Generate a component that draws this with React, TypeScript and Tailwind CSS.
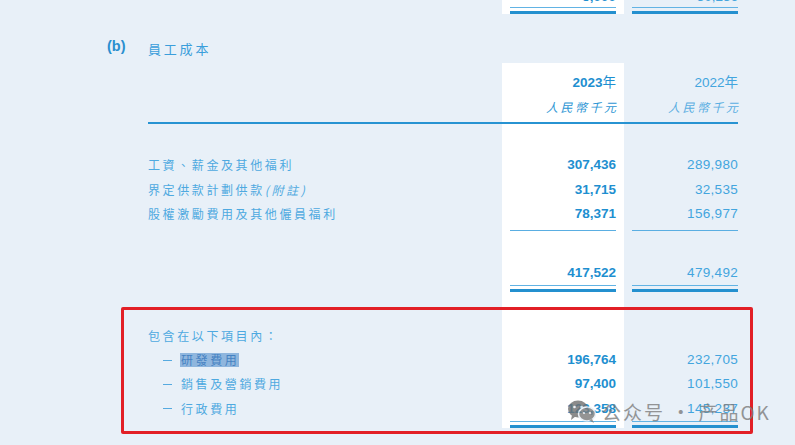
import React from 'react';

const cjk = { fontFamily: '"Noto Sans CJK TC", "Noto Sans CJK SC", sans-serif' };
const num = { fontFamily: '"Liberation Sans", Arial, sans-serif' };

function Row({
  h,
  left,
  label,
  a,
  b,
  className = '',
}: {
  h: string;
  left?: React.ReactNode;
  label?: React.ReactNode;
  a?: React.ReactNode;
  b?: React.ReactNode;
  className?: string;
}) {
  return (
    <div className={`grid grid-cols-[148px_354px_122px_122px] ${h} ${className}`}>
      <div className="flex items-center">{left}</div>
      <div className="flex items-center">{label}</div>
      <div className="bg-white px-2 flex items-center justify-end">{a}</div>
      <div className="px-2 flex items-center justify-end">{b}</div>
    </div>
  );
}

function DoubleLine() {
  return (
    <div className="flex flex-col">
      <div className="h-px bg-[#62b3e4]" />
      <div className="mt-[3px] h-[3px] bg-[#2490cf]" />
    </div>
  );
}

function Single() {
  return <div className="h-px bg-[#5aaee2]" />;
}

const Label = ({ children }: { children: React.ReactNode }) => (
  <span style={cjk} className="text-[12px] tracking-[2.6px] text-[#4ea9e0] leading-none">
    {children}
  </span>
);

const A = ({ children }: { children: React.ReactNode }) => (
  <span style={num} className="text-[13.5px] font-bold text-[#1e8fd0] leading-none">
    {children}
  </span>
);

const B = ({ children }: { children: React.ReactNode }) => (
  <span style={num} className="text-[13.5px] tracking-[0.3px] text-[#43a5de] leading-none">
    {children}
  </span>
);

export default function App() {
  return (
    <div className="relative w-[795px] h-[445px] overflow-hidden bg-[#e8f0f8]">
      {/* top leftover from previous table */}
      <div className="grid grid-cols-[148px_354px_122px_122px] h-[14px]">
        <div />
        <div />
        <div className="bg-white px-2 flex flex-col">
          <div className="h-[3px] overflow-hidden flex justify-end">
            <span style={num} className="text-[13.5px] font-bold text-[#1e8fd0] leading-[13px] -mt-[10px]">
              5,000
            </span>
          </div>
          <div className="mt-[4px]">
            <DoubleLine />
          </div>
        </div>
        <div className="px-2 flex flex-col">
          <div className="h-[3px] overflow-hidden flex justify-end">
            <span style={num} className="text-[13.5px] text-[#43a5de] leading-[13px] -mt-[10px]">
              30,236
            </span>
          </div>
          <div className="mt-[4px]">
            <DoubleLine />
          </div>
        </div>
      </div>

      {/* section heading */}
      <div className="h-[49px] flex items-end pb-[5px]">
        <div className="w-[148px] pl-[107px]">
          <span style={num} className="text-[14.5px] font-bold text-[#2a8fcf]">
            (b)
          </span>
        </div>
        <span style={cjk} className="text-[13px] tracking-[2.8px] text-[#3a9edb]">
          員工成本
        </span>
      </div>

      {/* column headers */}
      <div className="grid grid-cols-[148px_354px_122px_122px] h-[59px]">
        <div />
        <div />
        <div className="bg-white px-2 flex flex-col items-end pt-[10px]">
          <span style={num} className="text-[13.5px] font-bold text-[#1e8fd0] leading-[17px]">
            2023<span style={cjk} className="font-normal">年</span>
          </span>
          <span style={cjk} className="mt-[7px] text-[12px] italic tracking-[2.5px] -mr-[2.5px] text-[#2e96d4] leading-[17px]">
            人民幣千元
          </span>
        </div>
        <div className="px-2 flex flex-col items-end pt-[10px]">
          <span style={num} className="text-[13.5px] text-[#43a5de] leading-[17px]">
            2022<span style={cjk}>年</span>
          </span>
          <span style={cjk} className="mt-[7px] text-[12px] italic tracking-[2.5px] -mr-[2.5px] text-[#5aaee2] leading-[17px]">
            人民幣千元
          </span>
        </div>
      </div>
      <div className="grid grid-cols-[148px_598px] h-[2px]">
        <div />
        <div className="flex">
          <div className="flex-1 h-[2px] bg-[#2793d2] mr-2" />
        </div>
      </div>

      <Row h="h-[29px]" />
      <Row h="h-[24px]" label={<Label>工資、薪金及其他福利</Label>} a={<A>307,436</A>} b={<B>289,980</B>} />
      <Row h="h-[25px]" label={<Label>界定供款計劃供款<span className="italic">(附註)</span></Label>} a={<A>31,715</A>} b={<B>32,535</B>} />
      <Row h="h-[24px]" label={<Label>股權激勵費用及其他僱員福利</Label>} a={<A>78,371</A>} b={<B>156,977</B>} />
      <Row h="h-[4px]" />
      <div className="grid grid-cols-[148px_354px_122px_122px] h-[1px]">
        <div />
        <div />
        <div className="bg-white px-2"><Single /></div>
        <div className="px-2"><Single /></div>
      </div>
      <Row h="h-[30px]" />
      <Row h="h-[23px]" a={<A>417,522</A>} b={<B>479,492</B>} />
      <div className="grid grid-cols-[148px_354px_122px_122px] h-[8px]">
        <div />
        <div />
        <div className="bg-white px-2 pt-px"><DoubleLine /></div>
        <div className="px-2 pt-px"><DoubleLine /></div>
      </div>

      <Row h="h-[32px]" />
      <Row h="h-[24px]" label={<Label>包含在以下項目內：</Label>} />
      <Row
        h="h-[24px]"
        label={
          <div className="flex items-center">
            <span className="w-[9px] h-px bg-[#55aae0] ml-[15px] mr-[8px]" />
            <span style={cjk} className="text-[12px] tracking-[2.6px] leading-[14px] text-[#4682c2] bg-[#8fb6de] pl-[1px]">
              研發費用
            </span>
          </div>
        }
        a={<A>196,764</A>}
        b={<B>232,705</B>}
      />
      <Row
        h="h-[24px]"
        label={
          <div className="flex items-center">
            <span className="w-[9px] h-px bg-[#55aae0] ml-[15px] mr-[9px]" />
            <Label>銷售及營銷費用</Label>
          </div>
        }
        a={<A>97,400</A>}
        b={<B>101,550</B>}
      />
      <Row
        h="h-[25px]"
        label={
          <div className="flex items-center">
            <span className="w-[9px] h-px bg-[#55aae0] ml-[15px] mr-[9px]" />
            <Label>行政費用</Label>
          </div>
        }
        a={<A>123,358</A>}
        b={<B>145,237</B>}
      />
      <div className="grid grid-cols-[148px_354px_122px_122px] h-[7px]">
        <div />
        <div />
        <div className="bg-white px-2"><DoubleLine /></div>
        <div className="px-2"><DoubleLine /></div>
      </div>

      {/* red highlight frame */}
      <div className="absolute left-[121px] top-[307px] w-[632px] h-[127px] border-[3px] border-[#e21f26] rounded-[2px]" />

      {/* watermark */}
      <div className="absolute left-[567px] top-[399px] flex items-center opacity-80">
        <svg width="30" height="24" viewBox="0 0 30 24">
          <ellipse cx="11" cy="10" rx="10" ry="8.5" fill="#6f6f6f" />
          <path d="M5 16 L4 21 L9 17 Z" fill="#6f6f6f" />
          <ellipse cx="20" cy="15" rx="8.5" ry="7" fill="#7a7a7a" stroke="#e8f0f8" strokeWidth="1.5" />
          <path d="M25 20 L27 24 L22 21 Z" fill="#7a7a7a" />
          <circle cx="7.5" cy="8" r="1.3" fill="#e8f0f8" />
          <circle cx="14.5" cy="8" r="1.3" fill="#e8f0f8" />
          <circle cx="17" cy="14" r="1.1" fill="#e8f0f8" />
          <circle cx="23" cy="14" r="1.1" fill="#e8f0f8" />
        </svg>
        <span
          style={{ fontFamily: '"Noto Sans CJK SC", "Liberation Sans", sans-serif' }}
          className="ml-[5px] text-[19px] tracking-[2px] text-[#7d7d7d] leading-none"
        >
          公众号 · 产品OK
        </span>
      </div>
    </div>
  );
}
